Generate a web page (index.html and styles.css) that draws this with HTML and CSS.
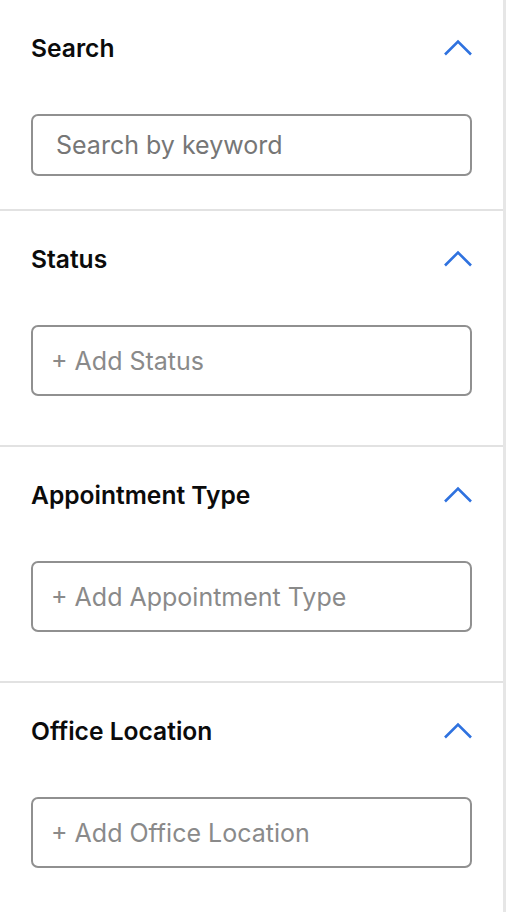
FILE: index.html
```html
<!DOCTYPE html>
<html lang="en">
<head>
  <meta charset="UTF-8">
  <meta name="viewport" content="width=device-width, initial-scale=1.0">
  <title>Filters</title>
  <link rel="stylesheet" href="styles.css">
</head>
<body>
  <div class="filter_panel">
    <div class="filter_item filter_item--search">
      <div class="filter_head">
        <h3>Search</h3>
        <svg class="chevron" width="30" height="17" viewBox="0 0 30 17"><path d="M2 15.5 L15 2.5 L28 15.5" fill="none" stroke="#2f72df" stroke-width="2.6"/></svg>
      </div>
      <input class="filter_input filter_input--search" type="text" placeholder="Search by keyword">
    </div>
    <div class="filter_item">
      <div class="filter_head">
        <h3>Status</h3>
        <svg class="chevron" width="30" height="17" viewBox="0 0 30 17"><path d="M2 15.5 L15 2.5 L28 15.5" fill="none" stroke="#2f72df" stroke-width="2.6"/></svg>
      </div>
      <input class="filter_input" type="text" placeholder="+ Add Status">
    </div>
    <div class="filter_item">
      <div class="filter_head">
        <h3>Appointment Type</h3>
        <svg class="chevron" width="30" height="17" viewBox="0 0 30 17"><path d="M2 15.5 L15 2.5 L28 15.5" fill="none" stroke="#2f72df" stroke-width="2.6"/></svg>
      </div>
      <input class="filter_input" type="text" placeholder="+ Add Appointment Type">
    </div>
    <div class="filter_item">
      <div class="filter_head">
        <h3>Office Location</h3>
        <svg class="chevron" width="30" height="17" viewBox="0 0 30 17"><path d="M2 15.5 L15 2.5 L28 15.5" fill="none" stroke="#2f72df" stroke-width="2.6"/></svg>
      </div>
      <input class="filter_input" type="text" placeholder="+ Add Office Location">
    </div>
  </div>
</body>
</html>
```

FILE: styles.css
```css
* {
  box-sizing: border-box;
}
body {
  margin: 0;
  background-color: #fff;
  font-family: Inter, "Liberation Sans", sans-serif;
}
.filter_panel {
  width: 506px;
  min-height: 912px;
  border-right: 3px solid #e6e6e6;
}
.filter_item {
  padding: 24px 31px 49px 31px;
  border-bottom: 2px solid #e2e2e2;
}
.filter_item:last-child {
  border-bottom: none;
}
.filter_item--search {
  padding-bottom: 33px;
}
.filter_head {
  height: 48px;
  display: flex;
  align-items: center;
  justify-content: space-between;
  margin-bottom: 42px;
}
.filter_head h3 {
  margin: 0;
  font-size: 24.6px;
  font-weight: 600;
  color: #0b0b0b;
  letter-spacing: 0;
}
.chevron {
  display: block;
  margin-right: -1px;
  margin-top: -2px;
}
.filter_input {
  display: block;
  width: 100%;
  height: 71px;
  border: 2px solid #909090;
  border-radius: 7px;
  padding: 0 18px;
  font-family: inherit;
  font-size: 25px;
  color: #333;
  outline: none;
}
.filter_input::placeholder {
  color: #8a8a8a;
}
.filter_input--search {
  height: 62px;
  padding: 0 23px;
}
.filter_input--search::placeholder {
  color: #767676;
}
```
